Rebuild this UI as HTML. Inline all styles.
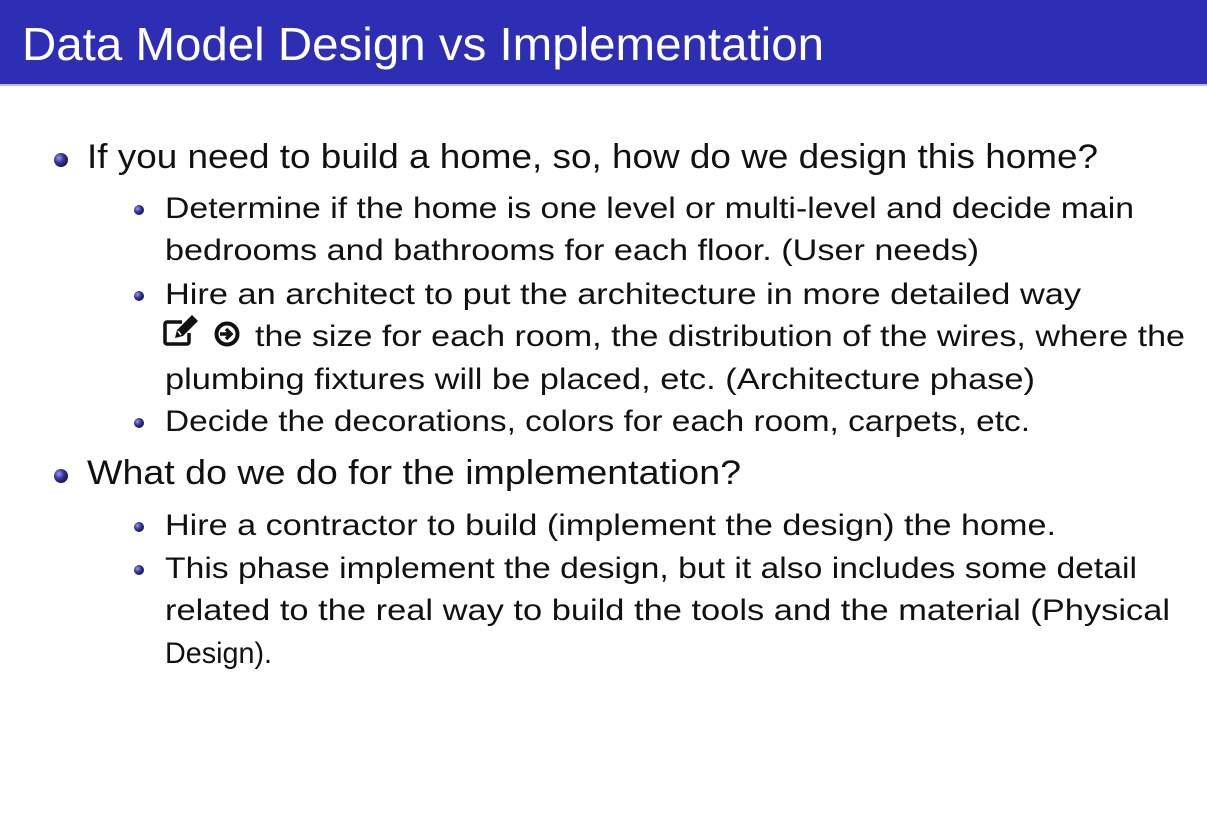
<!DOCTYPE html>
<html><head><meta charset="utf-8"><style>
html,body{margin:0;padding:0;background:#fff;}
svg{display:block}
text{font-family:"Liberation Sans",sans-serif;fill:#111;}
</style></head><body>
<svg width="1207" height="840" viewBox="0 0 1207 840" xmlns="http://www.w3.org/2000/svg">
<defs>
<radialGradient id="b" cx="0.35" cy="0.35" r="0.7">
<stop offset="0" stop-color="#9a9ae0"/><stop offset="0.5" stop-color="#3535a0"/><stop offset="1" stop-color="#14144a"/>
</radialGradient>
</defs>
<rect x="0" y="0" width="1207" height="84" fill="#2e2eb4"/>
<rect x="0" y="84" width="1207" height="2" fill="#b8b8e0"/>
<text x="22" y="60" font-size="46" style="fill:#fff" textLength="802" lengthAdjust="spacingAndGlyphs">Data Model Design vs Implementation</text>

<circle cx="61" cy="160" r="7" fill="url(#b)"/>
<text x="87" y="168" font-size="34" textLength="1011" lengthAdjust="spacingAndGlyphs">If you need to build a home, so, how do we design this home?</text>

<circle cx="139" cy="210" r="5" fill="url(#b)"/>
<text x="165" y="218" font-size="30" textLength="969" lengthAdjust="spacingAndGlyphs">Determine if the home is one level or multi-level and decide main</text>
<text x="165" y="260" font-size="30" textLength="814" lengthAdjust="spacingAndGlyphs">bedrooms and bathrooms for each floor. (User needs)</text>

<circle cx="139" cy="296" r="5" fill="url(#b)"/>
<text x="165" y="304" font-size="30" textLength="916" lengthAdjust="spacingAndGlyphs">Hire an architect to put the architecture in more detailed way</text>
<g fill="none" stroke="#111" stroke-width="3.5">
<path d="M182 322 H167 a2 2 0 0 0 -2 2 V342 a2 2 0 0 0 2 2 H187 a2 2 0 0 0 2 -2 V333"/>
</g>
<path d="M175 338 L177 330 L192 315 L198 321 L183 336 Z" fill="#111"/>
<path d="M178 331 L181 335" stroke="#fff" stroke-width="1.5"/>
<circle cx="227" cy="334" r="10.5" fill="none" stroke="#111" stroke-width="4"/>
<path d="M220 334 H230 M226 329 L231 334 L226 339" fill="none" stroke="#111" stroke-width="3.5"/>
<text x="255" y="346" font-size="30" textLength="930" lengthAdjust="spacingAndGlyphs">the size for each room, the distribution of the wires, where the</text>
<text x="165" y="389" font-size="30" textLength="870" lengthAdjust="spacingAndGlyphs">plumbing fixtures will be placed, etc. (Architecture phase)</text>

<circle cx="139" cy="423" r="5" fill="url(#b)"/>
<text x="165" y="431" font-size="30" textLength="865" lengthAdjust="spacingAndGlyphs">Decide the decorations, colors for each room, carpets, etc.</text>

<circle cx="61" cy="476" r="7" fill="url(#b)"/>
<text x="87" y="484" font-size="34" textLength="654" lengthAdjust="spacingAndGlyphs">What do we do for the implementation?</text>

<circle cx="139" cy="527" r="5" fill="url(#b)"/>
<text x="165" y="535" font-size="30" textLength="891" lengthAdjust="spacingAndGlyphs">Hire a contractor to build (implement the design) the home.</text>

<circle cx="139" cy="570" r="5" fill="url(#b)"/>
<text x="165" y="578" font-size="30" textLength="972" lengthAdjust="spacingAndGlyphs">This phase implement the design, but it also includes some detail</text>
<text x="165" y="620" font-size="30" textLength="1005" lengthAdjust="spacingAndGlyphs">related to the real way to build the tools and the material (Physical</text>
<text x="165" y="663" font-size="30" textLength="107" lengthAdjust="spacingAndGlyphs">Design).</text>
</svg>
</body></html>
